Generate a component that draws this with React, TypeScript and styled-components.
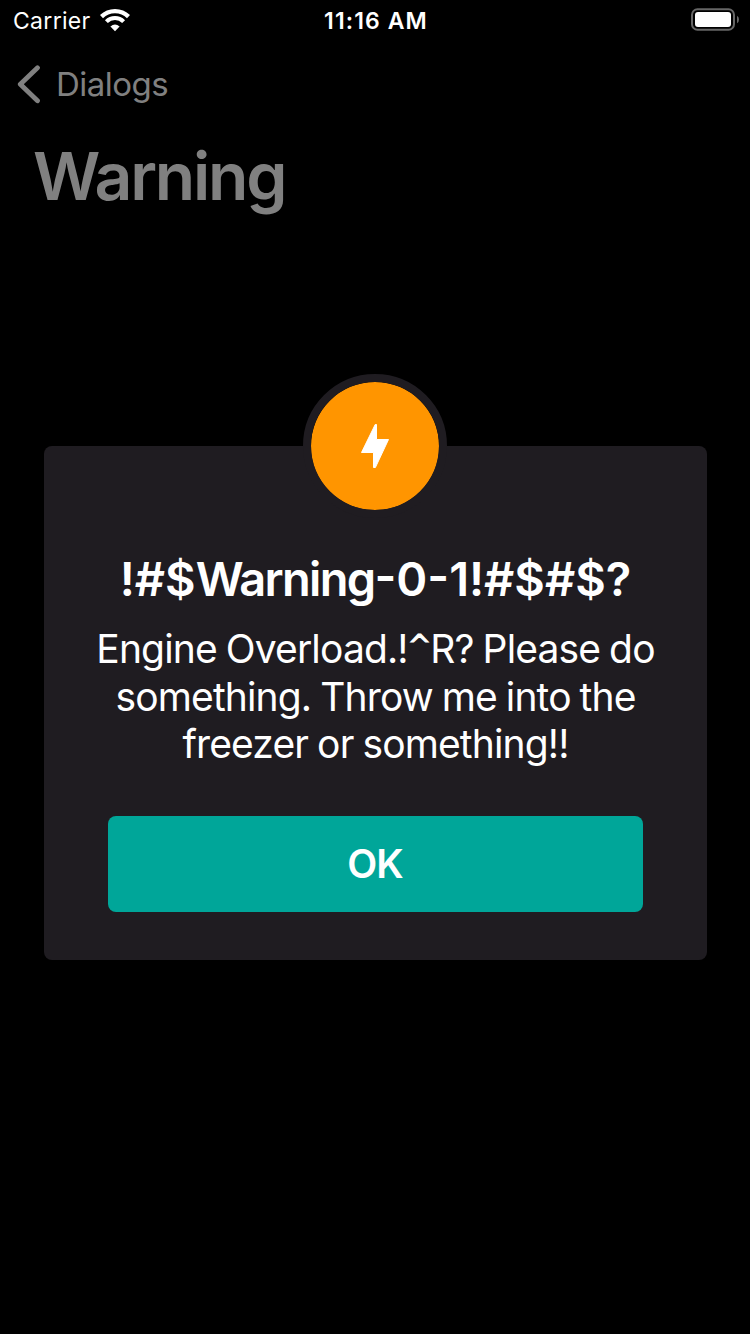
import React from 'react';
import styled, { createGlobalStyle } from 'styled-components';

const GlobalStyle = createGlobalStyle`
  * { box-sizing: border-box; }
  body {
    margin: 0;
    background: #000;
    color: #fff;
    font-family: Inter, "Liberation Sans", sans-serif;
    font-optical-sizing: none;
  }
`;

const Screen = styled.div`
  position: relative;
  width: 750px;
  height: 1334px;
  overflow: hidden;
  background: #000;
`;

const StatusBar = styled.header`
  display: grid;
  grid-template-columns: 1fr auto 1fr;
  align-items: center;
  height: 40px;
  padding: 0 11px 0 13px;
  font-size: 23px;
  line-height: 40px;
`;

const Carrier = styled.div`
  display: flex;
  align-items: center;
  gap: 9px;
  letter-spacing: 0.3px;
`;

const StatusText = styled.span`
  height: 40px;
  line-height: 42px;
`;

const Clock = styled(StatusText)`
  font-weight: 580;
  letter-spacing: 1.1px;
`;

const Battery = styled.div`
  display: flex;
  justify-content: flex-end;
`;

const NavBar = styled.nav`
  display: flex;
  align-items: center;
  height: 88px;
  padding-left: 17px;
  gap: 15px;
  color: #808080;
  font-size: 33px;
  letter-spacing: -0.5px;
`;

const PageTitle = styled.h1`
  margin: 0;
  padding-left: 33px;
  color: #808080;
  font-size: 66px;
  font-weight: 600;
  line-height: 96px;
  letter-spacing: -2.2px;
`;

const Overlay = styled.div`
  position: absolute;
  inset: 0;
  display: flex;
  flex-direction: column;
  align-items: center;
  justify-content: center;
  padding: 0 43px 0 44px;
`;

const Badge = styled.div`
  z-index: 1;
  display: flex;
  align-items: center;
  justify-content: center;
  width: 144px;
  height: 144px;
  margin: 0 1px -72px 0;
  border: 8px solid #1f1c21;
  border-radius: 50%;
  background: #ff9500;
  background-clip: padding-box;
`;

const Card = styled.section`
  width: 100%;
  height: 514px;
  padding: 105px 40px 48px;
  border-radius: 8px;
  background: #1f1c21;
  text-align: center;
`;

const CardTitle = styled.h2`
  margin: 0 0 18px;
  font-size: 47px;
  font-weight: 600;
  line-height: 56px;
  white-space: nowrap;
`;

const Tight = styled.span`
  letter-spacing: -1.7px;
`;

const Message = styled.p`
  margin: 0 0 48px;
  font-size: 39px;
  line-height: 47.7px;
  letter-spacing: -0.85px;
  word-spacing: -1.2px;
  white-space: nowrap;
`;

const Line = styled.span`
  display: block;
  height: 47.7px;
`;

const Caret = styled.span`
  font-family: "DejaVu Sans", sans-serif;
  font-size: 28px;
  line-height: 0;
  vertical-align: 8px;
  -webkit-text-stroke: 1px #fff;
`;

const Action = styled.button`
  display: block;
  width: 535px;
  height: 96px;
  margin: 0 auto;
  padding: 0;
  border: 0;
  border-radius: 8px;
  background: #00a699;
  color: #fff;
  font: 600 39px/96px Inter, "Liberation Sans", sans-serif;
  letter-spacing: -1px;
  text-indent: -1px;
`;

const WifiIcon = () => (
  <svg width="30" height="24" viewBox="0 0 30 24" fill="none" stroke="#fff">
    <path d="M1.5 8.6A19.2 19.2 0 0 1 28.5 8.6" strokeWidth="4.3" />
    <path d="M6.4 13.6A12.2 12.2 0 0 1 23.6 13.6" strokeWidth="4.1" />
    <path d="M15 23.2 10.4 18.4Q15 14.8 19.6 18.4Z" fill="#fff" stroke="none" />
  </svg>
);

const BatteryIcon = () => (
  <svg width="48" height="24" viewBox="0 0 48 24">
    <rect x="1" y="1.3" width="42" height="20.4" rx="5.5" fill="none" stroke="#666" strokeWidth="2" />
    <rect x="4" y="4" width="36" height="15" rx="3" fill="#fff" />
    <path d="M46 7.7Q48 9 48 11.5T46 15.3Z" fill="#666" />
  </svg>
);

const BackIcon = () => (
  <svg width="24" height="40" viewBox="0 0 24 40" fill="none" stroke="#808080" strokeWidth="4.8" strokeLinecap="round" strokeLinejoin="round">
    <path d="M20.5 3.8 3.3 20.3 20.5 36.8" />
  </svg>
);

const BoltIcon = () => (
  <svg width="30" height="46" viewBox="0 0 30 46" fill="#fff" stroke="#fff" strokeWidth="1" strokeLinejoin="round">
    <path d="M16.5 1.5V16.5H28.5L15.4 44.5H13.5V29.5H1.5L15.2 1.5Z" />
  </svg>
);

export default function App() {
  return (
    <>
      <GlobalStyle />
      <Screen>
        <StatusBar>
          <Carrier>
            <StatusText>Carrier</StatusText>
            <WifiIcon />
          </Carrier>
          <Clock>11:16 AM</Clock>
          <Battery>
            <BatteryIcon />
          </Battery>
        </StatusBar>
        <NavBar>
          <BackIcon />
          <span>Dialogs</span>
        </NavBar>
        <PageTitle>Warning</PageTitle>
        <Overlay>
          <Badge>
            <BoltIcon />
          </Badge>
          <Card role="dialog">
            <CardTitle>
              !#$<Tight>Warning</Tight>-0-1!#$#$?
            </CardTitle>
            <Message>
              <Line>
                Engine Overload.!<Caret>^</Caret>R? Please do
              </Line>
              <Line>something. Throw me into the</Line>
              <Line>freezer or something!!</Line>
            </Message>
            <Action>OK</Action>
          </Card>
        </Overlay>
      </Screen>
    </>
  );
}
